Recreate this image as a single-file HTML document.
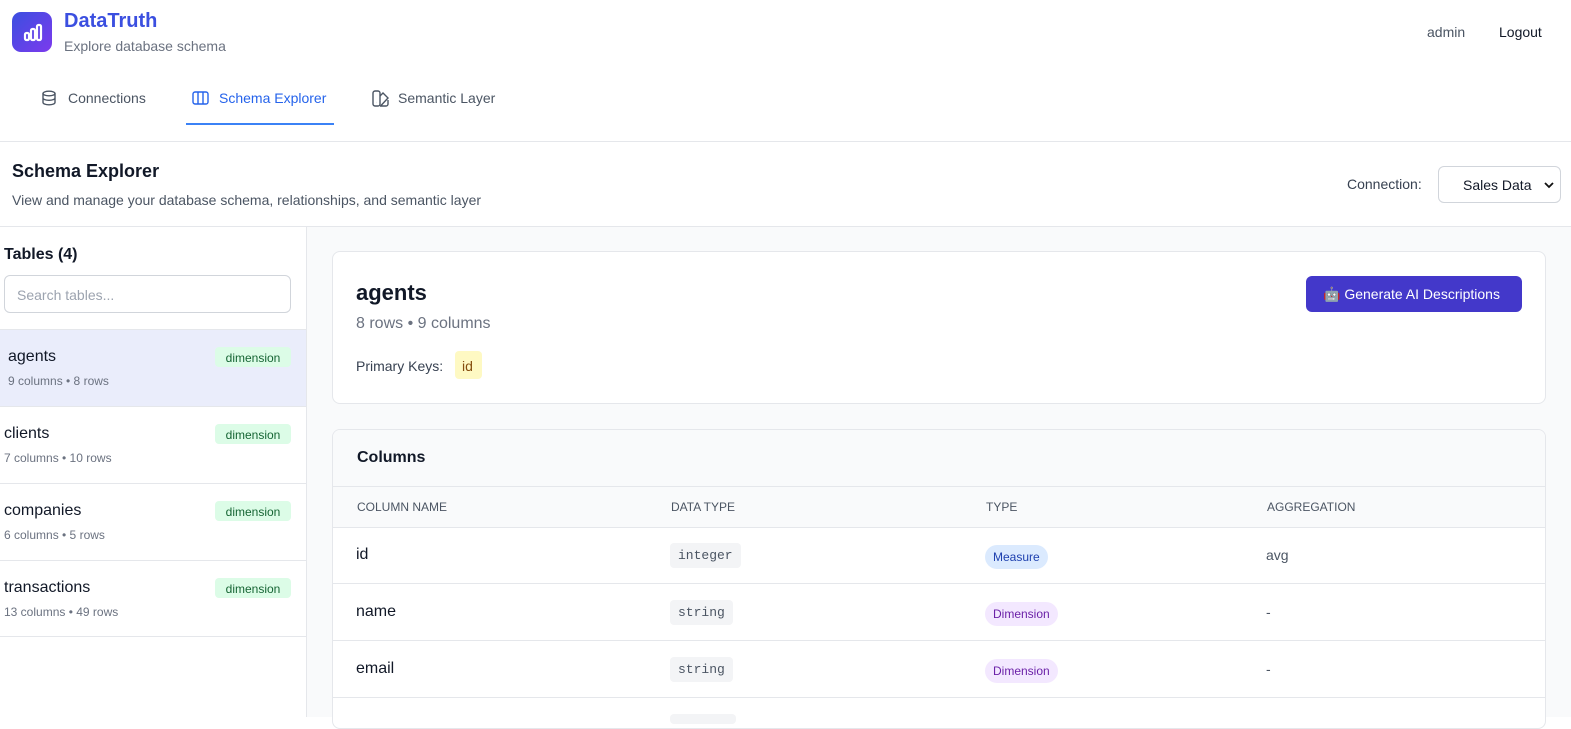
<!DOCTYPE html>
<html><head><meta charset="utf-8"><style>
*{box-sizing:border-box;margin:0;padding:0}
body{width:1571px;height:717px;overflow:hidden;font-family:"Liberation Sans",sans-serif;background:#fff;position:relative;color:#111827}
.a{position:absolute;white-space:nowrap}
.badge{position:absolute;background:#dcfce7;color:#166534;font-size:12px;height:20px;width:76px;text-align:center;padding-top:4px;border-radius:4px}
.mono{font-family:"Liberation Mono",monospace;font-size:13px;color:#4b5563;background:#f3f4f6;border-radius:4px;padding:5px 8px}
.pill{font-size:12px;padding:5px 8px;border-radius:12px}
</style></head><body>
<div class="a" style="left:12px;top:12px;width:40px;height:40px;border-radius:9px;background:linear-gradient(135deg,#3b4fe0,#7c3aed)">
<svg width="40" height="40" viewBox="0 0 40 40" fill="none" stroke="#fff" stroke-width="2.2"><rect x="13" y="21" width="4" height="7" rx="1.5"/><rect x="19" y="17" width="4" height="11" rx="1.5"/><rect x="25" y="13" width="4" height="15" rx="1.5"/></svg></div>
<div class="a" style="left:64px;top:10px;font-size:20px;font-weight:bold;color:#3b4fe0">DataTruth</div>
<div class="a" style="left:64px;top:38px;font-size:14px;color:#6b7280">Explore database schema</div>
<div class="a" style="left:1427px;top:24px;font-size:14px;color:#4b5563">admin</div>
<div class="a" style="left:1499px;top:24px;font-size:14px;color:#111827">Logout</div>
<svg class="a" style="left:41px;top:90px" width="16" height="16" viewBox="0 0 16 16" fill="none" stroke="#4b5563" stroke-width="1.4"><ellipse cx="8" cy="3.5" rx="6" ry="2.3"/><path d="M2 3.5v9c0 1.3 2.7 2.3 6 2.3s6-1 6-2.3v-9M2 8c0 1.3 2.7 2.3 6 2.3s6-1 6-2.3"/></svg>
<div class="a" style="left:68px;top:90px;font-size:14px;color:#4b5563">Connections</div>
<svg class="a" style="left:192px;top:90px" width="17" height="16" viewBox="0 0 17 16" fill="none" stroke="#2563eb" stroke-width="1.4"><rect x="1" y="2" width="15" height="12" rx="2"/><path d="M6 2v12M11 2v12"/></svg>
<div class="a" style="left:219px;top:90px;font-size:14px;color:#2563eb">Schema Explorer</div>
<div class="a" style="left:186px;top:123px;width:148px;height:2px;background:#3b82f6"></div>
<svg class="a" style="left:372px;top:90px" width="17" height="17" viewBox="0 0 17 17" fill="none" stroke="#4b5563" stroke-width="1.4"><rect x="1" y="1" width="7" height="15" rx="2"/><path d="M8 6l3-3 5 5-7 7.5M8 16h6a2 2 0 0 0 2-2v-4M4.5 12.5h.1"/></svg>
<div class="a" style="left:398px;top:90px;font-size:14px;color:#4b5563">Semantic Layer</div>
<div class="a" style="left:0;top:141px;width:1571px;height:1px;background:#e5e7eb"></div>
<div class="a" style="left:12px;top:161px;font-size:18px;font-weight:600">Schema Explorer</div>
<div class="a" style="left:12px;top:192px;font-size:14px;color:#4b5563">View and manage your database schema, relationships, and semantic layer</div>
<div class="a" style="left:1347px;top:176px;font-size:14px;color:#374151">Connection:</div>
<div class="a" style="left:1438px;top:166px;width:123px;height:37px;border:1px solid #d1d5db;border-radius:6px;font-size:14px;padding:10px 0 0 24px">Sales Data
<svg style="position:absolute;right:6px;top:14px" width="10" height="8" viewBox="0 0 10 8" fill="none" stroke="#111" stroke-width="1.8"><path d="M1 2l4 4 4-4"/></svg></div>
<div class="a" style="left:0;top:226px;width:1571px;height:1px;background:#e5e7eb"></div>
<div class="a" style="left:306px;top:227px;width:1px;height:490px;background:#e5e7eb"></div>
<div class="a" style="left:307px;top:227px;width:1264px;height:490px;background:#f9fafb"></div>
<div class="a" style="left:4px;top:246px;font-size:16px;font-weight:600">Tables (4)</div>
<div class="a" style="left:4px;top:275px;width:287px;height:38px;border:1px solid #d1d5db;border-radius:6px;font-size:14px;color:#9ca3af;padding:11px 12px">Search tables...</div>
<div class="a" style="left:0;top:329px;width:306px;height:1px;background:#e5e7eb"></div>
<div class="a" style="left:0;top:330px;width:306px;height:76px;background:#eaedfb"></div>
<div class="a" style="left:8px;top:348px;font-size:16px">agents</div>
<div class="a" style="left:8px;top:374px;font-size:12px;color:#6b7280">9 columns • 8 rows</div>
<div class="badge" style="left:215px;top:347px">dimension</div>
<div class="a" style="left:0;top:406px;width:306px;height:1px;background:#e5e7eb"></div>
<div class="a" style="left:4px;top:425px;font-size:16px">clients</div>
<div class="a" style="left:4px;top:451px;font-size:12px;color:#6b7280">7 columns • 10 rows</div>
<div class="badge" style="left:215px;top:424px">dimension</div>
<div class="a" style="left:0;top:483px;width:306px;height:1px;background:#e5e7eb"></div>
<div class="a" style="left:4px;top:502px;font-size:16px">companies</div>
<div class="a" style="left:4px;top:528px;font-size:12px;color:#6b7280">6 columns • 5 rows</div>
<div class="badge" style="left:215px;top:501px">dimension</div>
<div class="a" style="left:0;top:560px;width:306px;height:1px;background:#e5e7eb"></div>
<div class="a" style="left:4px;top:579px;font-size:16px">transactions</div>
<div class="a" style="left:4px;top:605px;font-size:12px;color:#6b7280">13 columns • 49 rows</div>
<div class="badge" style="left:215px;top:578px">dimension</div>
<div class="a" style="left:0;top:636px;width:306px;height:1px;background:#e5e7eb"></div>
<div class="a" style="left:332px;top:251px;width:1214px;height:153px;background:#fff;border:1px solid #e5e7eb;border-radius:8px"></div>
<div class="a" style="left:356px;top:280px;font-size:22px;font-weight:bold">agents</div>
<div class="a" style="left:356px;top:315px;font-size:16px;color:#6b7280">8 rows • 9 columns</div>
<div class="a" style="left:356px;top:358px;font-size:14px;color:#374151">Primary Keys:</div>
<div class="a" style="left:455px;top:351px;width:27px;height:28px;background:#fef9c3;border-radius:4px;font-size:14px;color:#854d0e;padding:7px 0 0 7px">id</div>
<div class="a" style="left:1306px;top:276px;width:216px;height:36px;background:#4338ca;border-radius:6px;color:#fff;font-size:14px;padding:10px 0 0 17px">🤖 Generate AI Descriptions</div>
<div class="a" style="left:332px;top:429px;width:1214px;height:300px;background:#fff;border:1px solid #e5e7eb;border-radius:8px;overflow:hidden">
<div style="height:57px;background:#f9fafb;border-bottom:1px solid #e5e7eb;font-size:16px;font-weight:600;padding:19px 0 0 24px">Columns</div>
<div style="height:41px;background:#f9fafb;border-bottom:1px solid #e5e7eb;position:relative;font-size:12px;color:#4b5563">
<span class="a" style="left:24px;top:13px">COLUMN NAME</span><span class="a" style="left:338px;top:13px">DATA TYPE</span><span class="a" style="left:653px;top:13px">TYPE</span><span class="a" style="left:934px;top:13px">AGGREGATION</span></div>
</div>
<div class="a" style="left:356px;top:546px;font-size:16px">id</div>
<div class="a mono" style="left:670px;top:543px">integer</div>
<div class="a pill" style="left:985px;top:545px;background:#dbeafe;color:#1e40af">Measure</div>
<div class="a" style="left:1266px;top:547px;font-size:14px;color:#4b5563">avg</div>
<div class="a" style="left:333px;top:583px;width:1212px;height:1px;background:#e5e7eb"></div>
<div class="a" style="left:356px;top:603px;font-size:16px">name</div>
<div class="a mono" style="left:670px;top:600px">string</div>
<div class="a pill" style="left:985px;top:602px;background:#f3e8ff;color:#6b21a8">Dimension</div>
<div class="a" style="left:1266px;top:604px;font-size:14px;color:#4b5563">-</div>
<div class="a" style="left:333px;top:640px;width:1212px;height:1px;background:#e5e7eb"></div>
<div class="a" style="left:356px;top:660px;font-size:16px">email</div>
<div class="a mono" style="left:670px;top:657px">string</div>
<div class="a pill" style="left:985px;top:659px;background:#f3e8ff;color:#6b21a8">Dimension</div>
<div class="a" style="left:1266px;top:661px;font-size:14px;color:#4b5563">-</div>
<div class="a" style="left:333px;top:697px;width:1212px;height:1px;background:#e5e7eb"></div>
<div class="a" style="left:670px;top:714px;width:66px;height:10px;background:#f3f4f6;border-radius:4px"></div>
</body></html>
